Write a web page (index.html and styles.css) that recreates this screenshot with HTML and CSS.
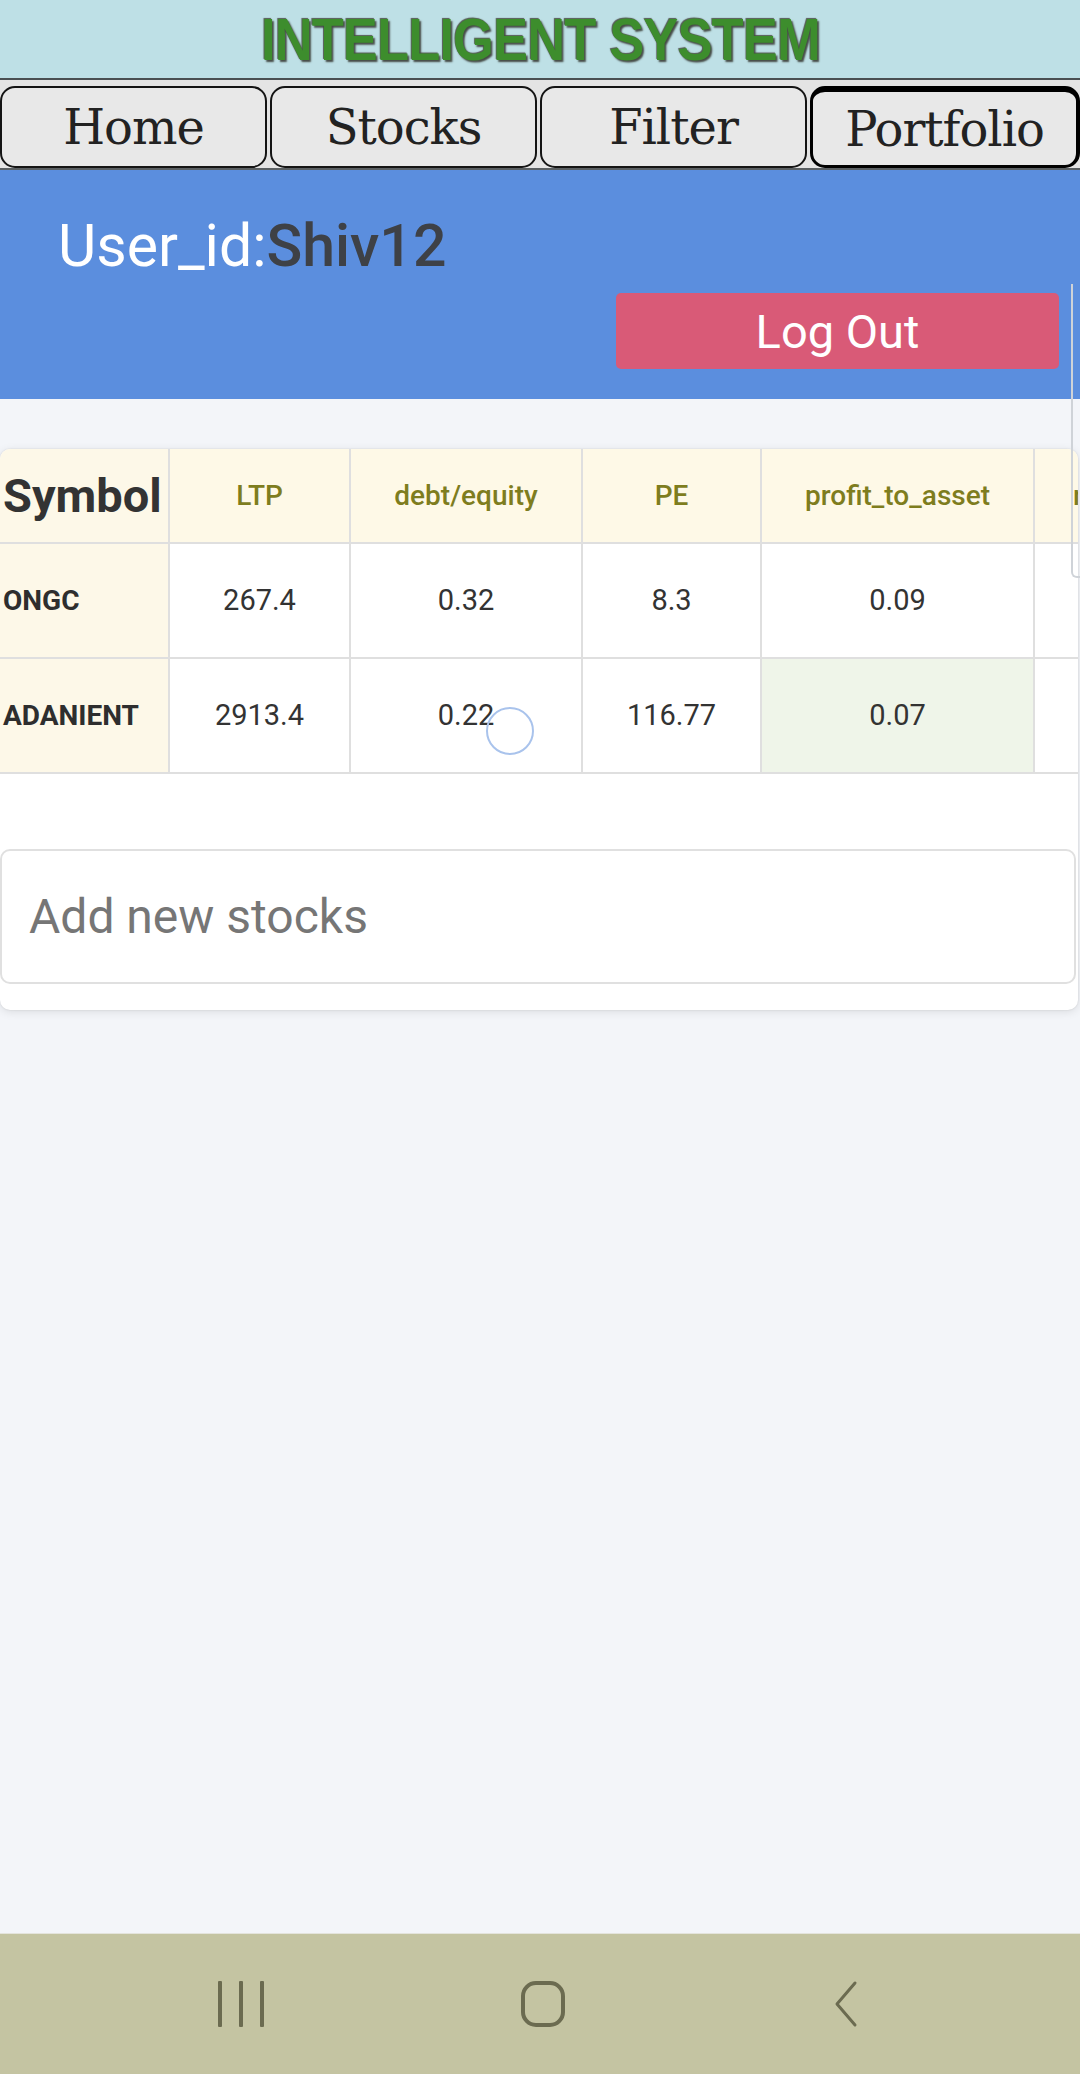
FILE: index.html
```html
<!DOCTYPE html>
<html lang="en">
<head>
<meta charset="utf-8">
<title>Intelligent System</title>
<link rel="stylesheet" href="styles.css">
</head>
<body>
<div class="screen">
  <header class="topbar">
    <h1 class="title"><span>INTELLIGENT SYSTEM</span></h1>
  </header>
  <nav class="tabs">
    <button class="tab">Home</button>
    <button class="tab">Stocks</button>
    <button class="tab">Filter</button>
    <button class="tab tab-active">Portfolio</button>
  </nav>
  <section class="user">
    <div class="uid"><span class="uid-label">User_id:</span><span class="uid-name">Shiv12</span></div>
    <div class="actions"><button class="logout">Log Out</button></div>
  </section>
  <main class="content">
    <div class="card">
      <div class="table-wrap">
        <table class="stocks">
          <colgroup>
            <col class="c-sym"><col class="c-ltp"><col class="c-de"><col class="c-pe"><col class="c-pta"><col class="c-more">
          </colgroup>
          <thead>
            <tr>
              <th class="sym sym-head">Symbol</th>
              <th>LTP</th>
              <th>debt/equity</th>
              <th>PE</th>
              <th>profit_to_asset</th>
              <th class="more-head">r</th>
            </tr>
          </thead>
          <tbody>
            <tr>
              <td class="sym">ONGC</td>
              <td>267.4</td>
              <td>0.32</td>
              <td>8.3</td>
              <td>0.09</td>
              <td></td>
            </tr>
            <tr>
              <td class="sym">ADANIENT</td>
              <td>2913.4</td>
              <td>0.22</td>
              <td>116.77</td>
              <td class="good">0.07</td>
              <td></td>
            </tr>
          </tbody>
        </table>
      </div>
      <div class="add">
        <input class="add-input" type="text" placeholder="Add new stocks">
      </div>
    </div>
  </main>
  <footer class="sysnav">
    <span class="ico ico-recent"><i></i><i></i><i></i></span>
    <span class="ico ico-home"></span>
    <svg class="ico-back" width="34" height="48" viewBox="0 0 34 48"><path d="M26 3 L8 24 L26 45" fill="none" stroke="#6b6b50" stroke-width="3" stroke-linecap="round" stroke-linejoin="round"/></svg>
  </footer>
  <div class="scroll-thumb"></div>
  <div class="touch"></div>
</div>
</body>
</html>
```

FILE: styles.css
```css
* { box-sizing: border-box; }
html, body { margin: 0; padding: 0; }
body { width: 1080px; height: 2074px; overflow: hidden; background: #f3f5f9; font-family: Roboto, "Liberation Sans", Arial, sans-serif; }

.screen { position: relative; width: 1080px; height: 2074px; display: flex; flex-direction: column; }

.topbar {
  height: 80px;
  background: #bee0e6;
  border-bottom: 2px solid #4a4f52;
  display: flex;
  align-items: center;
  justify-content: center;
}
.title { margin: 0; font: 700 60px/1 "Liberation Sans", Arial, sans-serif; color: #3d8d2d; letter-spacing: -1px; }
.title span {
  display: inline-block;
  transform: scaleX(0.875);
  text-shadow: 2px 2px 2px #454a45, -1px -1px 1px #555a55;
  padding-top: 2px;
}

.tabs {
  height: 90px;
  background: #e4e4e4;
  display: flex;
  gap: 3px;
  padding: 6px 0 2px;
  border-bottom: 2px solid #5a5f62;
}
.tab {
  flex: 1;
  height: 82px;
  margin: 0;
  padding: 0;
  border: 2px solid #141414;
  border-radius: 15px;
  background: #e8e8e8;
  font: 400 48px/1 "DejaVu Serif", "Liberation Serif", serif;
  color: #222;
  letter-spacing: -1px;
}
.tab-active { border-width: 6px 4px 3px 3px; border-color: #000; }

.user {
  height: 229px;
  background: #5b8ede;
  padding: 38px 21px 0 58px;
  display: flex;
  flex-direction: column;
}
.uid { font: 400 59px/76px Roboto, sans-serif; color: #fff; }
.uid-name { color: #3e4146; font-weight: 500; }
.actions { display: flex; justify-content: flex-end; margin-top: 9px; }
.logout {
  width: 443px;
  height: 76px;
  border: 0;
  border-radius: 5px;
  background: #d95a77;
  color: #fff;
  font: 400 47px/1 Roboto, sans-serif;
  padding: 0;
}

.content { flex: 1; padding-top: 50px; }
.card {
  width: 1078px;
  background: #fff;
  border-radius: 10px;
  box-shadow: 0 2px 10px rgba(0,0,0,0.10), 0 0 2px rgba(0,0,0,0.12);
  padding-bottom: 26px;
  overflow: hidden;
}
.table-wrap { overflow: hidden; }
.stocks { border-collapse: collapse; table-layout: fixed; width: 1184px; }
.c-sym { width: 169px; }
.c-ltp { width: 181px; }
.c-de { width: 232px; }
.c-pe { width: 179px; }
.c-pta { width: 273px; }
.c-more { width: 150px; }
.stocks th, .stocks td { border: 2px solid #dfdfdf; text-align: center; }
.stocks tr > :first-child { border-left: 0; }
.stocks thead th { border-top: 0; }
.stocks th {
  height: 94px;
  background: #fef9e7;
  color: #7e7d1e;
  font: 500 28px/1 Roboto, sans-serif;
}
.stocks .more-head { text-align: left; padding-left: 38px; }
.stocks td {
  height: 115px;
  color: #333;
  font: 400 29px/1 Roboto, sans-serif;
}
.stocks .sym {
  background: #fdf8e8;
  text-align: left;
  padding-left: 3px;
  color: #2e2e2e;
  font: 700 28px/1 Roboto, sans-serif;
}
.stocks .sym-head { font: 700 47px/1 Roboto, sans-serif; color: #333; padding-left: 3px; }
.stocks .good { background: #eff5e9; }

.add { padding: 75px 2px 0 0; }
.add-input {
  display: block;
  width: 100%;
  height: 135px;
  border: 2px solid #e0e0e0;
  border-radius: 10px;
  padding: 0 27px;
  font: 400 48px/1 Roboto, sans-serif;
  color: #333;
  background: #fff;
  outline: none;
}
.add-input::placeholder { color: #767676; }

.sysnav {
  height: 141px;
  background: #c4c4a2;
  border-top: 1px solid #e4e4dc;
  display: flex;
  align-items: center;
  padding: 0 0 0 218px;
}
.ico-recent { display: flex; gap: 17px; width: 46px; height: 46px; }
.ico-recent i { display: block; width: 4px; height: 46px; background: #6b6b50; border-radius: 1px; }
.ico-home {
  margin-left: 257px;
  width: 44px;
  height: 46px;
  border: 4px solid #6b6b50;
  border-radius: 15px;
}
.ico-back { margin-left: 264px; }

.scroll-thumb {
  position: absolute;
  left: 1071px;
  top: 284px;
  width: 10px;
  height: 294px;
  border-left: 2px solid #cfd3d8;
  border-bottom: 2px solid #cfd3d8;
  border-radius: 0 0 0 6px;
}
.touch {
  position: absolute;
  left: 486px;
  top: 707px;
  width: 48px;
  height: 48px;
  border: 2px solid #a9c3ec;
  border-radius: 50%;
}
```
